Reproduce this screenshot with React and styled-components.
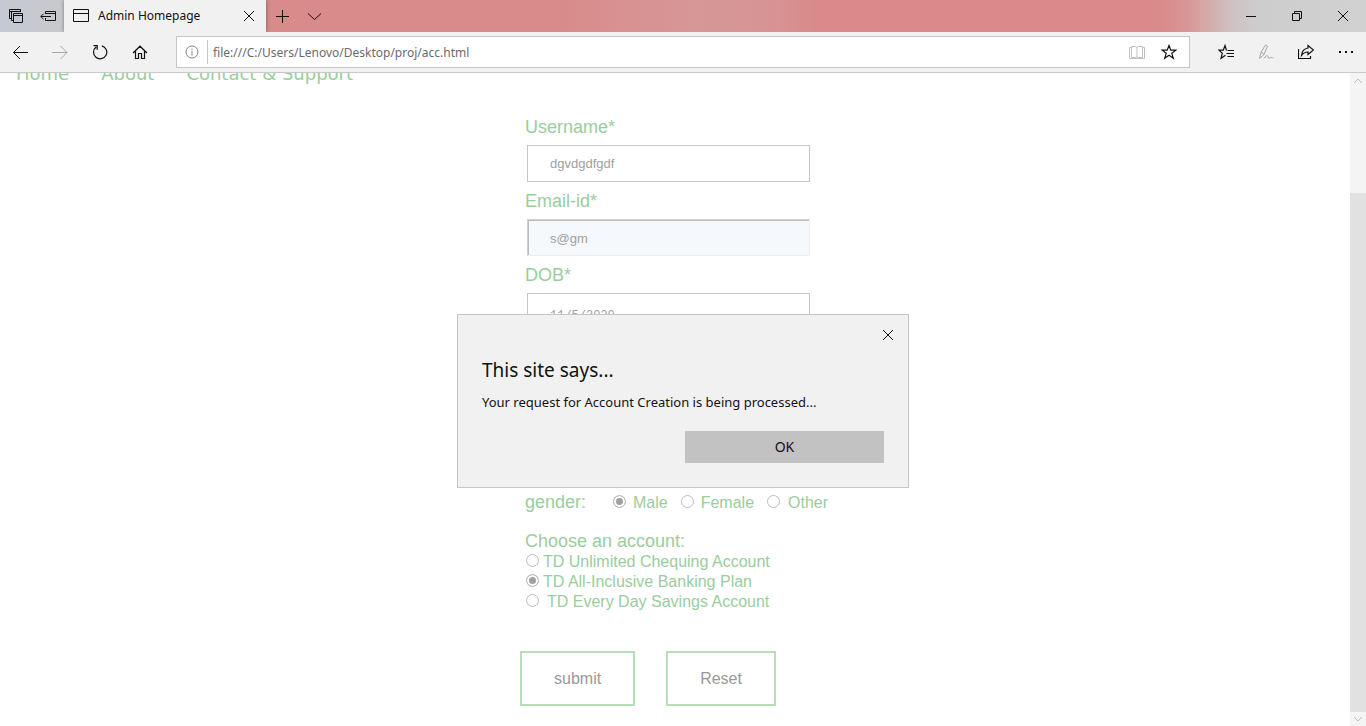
import React from "react";
import styled, { createGlobalStyle, css } from "styled-components";

const GlobalStyle = createGlobalStyle`
  * { box-sizing: border-box; }
  body {
    margin: 0;
    background: #fff;
    font-family: "Noto Sans", "Open Sans", sans-serif;
  }
  button, input { font: inherit; }
`;

const green = "#9acd9e";
const arial = '"Liberation Sans", Arial, sans-serif';

const Window = styled.div`
  display: flex;
  flex-direction: column;
  height: 100vh;
  overflow: hidden;
`;

const TitleBar = styled.header`
  display: flex;
  flex: none;
  height: 32px;
  background: linear-gradient(
    90deg,
    #c3c9d3 0%,
    #c9c9cc 5%,
    #d98a8a 17%,
    #d98b8b 41%,
    #d79797 51%,
    #d79494 56%,
    #d98a89 60%,
    #d98a89 85%,
    #d79796 87%,
    #cfc0c0 90%,
    #cdcdcd 92%,
    #d1d1d1 100%
  );
`;

const IconButton = styled.button`
  display: flex;
  align-items: center;
  justify-content: center;
  flex: none;
  width: ${(p) => p.$width || 40}px;
  height: 100%;
  padding: 0;
  border: 0;
  background: none;
  color: ${(p) => (p.$muted ? "#a6a6a6" : "#111")};
`;

const Icon = styled.svg.attrs({ viewBox: "0 0 16 16", "aria-hidden": true })`
  display: block;
  flex: none;
  width: 16px;
  height: 16px;
  fill: none;
  stroke: currentColor;
  stroke-width: 1;
`;

const Tab = styled.div`
  display: flex;
  align-items: center;
  flex: none;
  width: 202px;
  padding-left: 9px;
  gap: 9px;
  background: #f1f1f1;
  color: #111;
  font-size: 12px;
  box-shadow: 0 0 4px rgba(0, 0, 0, 0.4);
  clip-path: inset(0 -4px 0 -4px);
`;

const TabTitle = styled.span`
  flex: 1;
  padding-bottom: 2px;
  white-space: nowrap;
`;

const Spacer = styled.div`
  flex: 1;
`;

const ToolBar = styled.div`
  display: flex;
  align-items: center;
  flex: none;
  height: 41px;
  background: #f1f1f1;
  border-bottom: 1px solid #c9c9c9;
`;

const AddressBar = styled.div`
  display: flex;
  align-items: center;
  flex: 1;
  height: 32px;
  margin: 0 16px;
  padding-right: 4px;
  border: 1px solid #c6c6c6;
  background: #fff;
`;

const Address = styled.input`
  flex: 1;
  min-width: 0;
  height: 24px;
  padding: 0 5px;
  border: 0;
  border-left: 1px solid #c6c6c6;
  outline: 0;
  background: none;
  color: #6b6b6b;
  font-size: 12px;
`;

const Viewport = styled.div`
  position: relative;
  display: flex;
  flex: 1;
  min-height: 0;
`;

const Page = styled.main`
  flex: 1;
  overflow: hidden;
  color: ${green};
  font-family: ${arial};
`;

const Nav = styled.nav`
  display: flex;
  gap: 32px;
  height: 20px;
  margin-top: -9px;
  padding-left: 16px;
  font: 18px/20px "DejaVu Sans", Verdana, sans-serif;
`;

const NavLink = styled.a`
  color: ${green};
  text-decoration: none;
`;

const Form = styled.form`
  width: 310px;
  margin: 33px auto 0;
`;

const Field = styled.div`
  margin-bottom: 9px;
  padding-left: 5px;
`;

const labelText = css`
  font-size: 18px;
  line-height: 20px;
`;

const Label = styled.label`
  display: block;
  margin-bottom: 8px;
  ${labelText}
`;

const TextInput = styled.input`
  display: block;
  width: 283px;
  height: 37px;
  margin-left: 2px;
  padding: 0 22px;
  border: 1px solid #c6c6c6;
  outline: 0;
  background: #fff;
  color: #a0a0a0;
  font-family: ${(p) => (p.$mono ? '"Liberation Mono", monospace' : arial)};
  font-size: ${(p) => (p.$mono ? 12 : 13)}px;
  line-height: 16px;
  ${(p) =>
    p.$filled &&
    css`
      padding-top: 2px;
      border-color: #d0d0d0 #eeeeee #eeeeee #d0d0d0;
      background: #f5f9fd;
      box-shadow: inset 1px 1px #bcbcbc;
    `}
  ${(p) =>
    p.$mono &&
    css`
      padding-top: 8px;
    `}
`;

const Group = styled.fieldset`
  min-width: 0;
  margin: 0;
  padding: 0 0 0 5px;
  border: 0;
`;

const GenderGroup = styled(Group)`
  display: flex;
  align-items: center;
  height: 20px;
  margin: 162px 0 19px;
  white-space: nowrap;
`;

const GroupTitle = styled.span`
  display: block;
  ${labelText}
`;

const GenderTitle = styled(GroupTitle)`
  flex: none;
  width: 88px;
`;

const Option = styled.label`
  display: flex;
  align-items: center;
  gap: ${(p) => p.$gap}px;
  height: 20px;
  margin-right: 13px;
  padding-top: 2px;
  font-size: 16px;
  line-height: 20px;
  white-space: nowrap;
`;

const Radio = styled.input.attrs({ type: "radio" })`
  appearance: none;
  flex: none;
  width: 13px;
  height: 13px;
  margin: 0 0 4px;
  border: 1px solid #bdbdbd;
  border-radius: 50%;
  background: #fff;
  &:checked {
    background: #a0a0a0;
    box-shadow: inset 0 0 0 2px #fff;
  }
`;

const AccountOption = styled(Option)`
  padding-left: 1px;
`;

const Actions = styled.div`
  display: flex;
  gap: 31px;
  margin-top: 40px;
`;

const ActionButton = styled.button`
  height: 55px;
  padding: 0 32px;
  border: 2px solid #b7dfb9;
  background: #fff;
  color: #999;
  font-family: ${arial};
  font-size: 16px;
`;

const ScrollBar = styled.div`
  display: flex;
  flex-direction: column;
  flex: none;
  width: 16px;
  background: #f4f4f4;
  color: #bdbdbd;
`;

const ScrollArrow = styled.div`
  flex: none;
  height: 16px;
`;

const ScrollThumb = styled.div`
  flex: 1;
  margin-top: 104px;
  margin-bottom: -2px;
  background: #e1e1e1;
`;

const Overlay = styled.div`
  position: absolute;
  inset: 0;
  display: flex;
  align-items: center;
  justify-content: center;
  padding-top: 3px;
`;

const Dialog = styled.section`
  display: flex;
  flex-direction: column;
  width: 452px;
  padding: 0 24px 24px;
  border: 1px solid #c6c6c6;
  background: #f1f1f1;
  color: #111;
`;

const DialogClose = styled(IconButton)`
  align-self: flex-end;
  height: 40px;
  margin-right: -24px;
`;

const DialogTitle = styled.h1`
  margin: 0;
  font-size: 19px;
  font-weight: 400;
  line-height: 30px;
`;

const DialogText = styled.p`
  margin: 7px 0 19px;
  font-size: 13px;
  line-height: 20px;
`;

const OkButton = styled.button`
  align-self: flex-end;
  width: 199px;
  height: 32px;
  padding: 0 0 2px;
  border: 0;
  background: #c2c2c2;
  color: #111;
  font-size: 14px;
`;

const Cross = () => (
  <Icon>
    <path d="M3 3l10 10M13 3L3 13" />
  </Icon>
);

export default function App() {
  return (
    <Window>
      <GlobalStyle />
      <TitleBar>
        <IconButton $width={32} aria-label="Tabs set aside">
          <Icon>
            <path d="M3 10.5H1.5v-9h11V4M1.5 3.5h11M5.500 12.500H3.500v-9M5.500 5.500h9v9h-9zM5.500 7.500h9" />
          </Icon>
        </IconButton>
        <IconButton $width={32} aria-label="Set these tabs aside">
          <Icon>
            <path d="M5.5 6V3.5h10v9h-10V10M5.5 5.5h10M.8 8.5H11M3.5 5.8L.8 8.5l2.7 2.7" />
          </Icon>
        </IconButton>
        <Tab>
          <Icon>
            <path d="M.5 1.5h15v12H.5zM.5 5.5h15" />
          </Icon>
          <TabTitle>Admin Homepage</TabTitle>
          <IconButton $width={34} aria-label="Close tab">
            <Cross />
          </IconButton>
        </Tab>
        <IconButton $width={32} aria-label="New tab">
          <Icon>
            <path d="M8.5 2v13M2 8.5h13" />
          </Icon>
        </IconButton>
        <IconButton $width={32} aria-label="Show tab previews">
          <Icon>
            <path d="M2 5.5l6.5 6L15 5.5" />
          </Icon>
        </IconButton>
        <Spacer />
        <IconButton $width={46} aria-label="Minimize">
          <Icon>
            <path d="M3 8.5h10" />
          </Icon>
        </IconButton>
        <IconButton $width={46} aria-label="Restore">
          <Icon>
            <path d="M3.5 5.5h7v7h-7zM5.5 5.5v-2h7v7h-2" />
          </Icon>
        </IconButton>
        <IconButton $width={46} aria-label="Close">
          <Cross />
        </IconButton>
      </TitleBar>

      <ToolBar>
        <IconButton aria-label="Back">
          <Icon>
            <path d="M16 8.5H1.5M8 2L1.5 8.5 8 15" />
          </Icon>
        </IconButton>
        <IconButton $muted aria-label="Forward">
          <Icon>
            <path d="M0 8.5h15M8.5 2L15 8.5 8.5 15" />
          </Icon>
        </IconButton>
        <IconButton aria-label="Refresh">
          <Icon>
            <path d="M9.8 1.8A6.6 6.6 0 1 1 4.2 2.9M1.5 1.7h3.7v4" strokeWidth="1.2" />
          </Icon>
        </IconButton>
        <IconButton aria-label="Home">
          <Icon>
            <path d="M1 9l7-6.8L15 9M3.5 7v7.5h3v-5h3v5h3V7" strokeWidth="1.2" />
          </Icon>
        </IconButton>
        <AddressBar>
          <IconButton $width={30} $muted aria-label="Site information">
            <Icon>
              <circle cx="8" cy="8" r="6" stroke="#858585" />
              <path d="M8 7v4.5M8 4.5V6" stroke="#858585" />
            </Icon>
          </IconButton>
          <Address
            aria-label="Address"
            defaultValue="file:///C:/Users/Lenovo/Desktop/proj/acc.html"
          />
          <IconButton $width={32} $muted aria-label="Reading view">
            <Icon>
              <path
                d="M8 3.5Q6.5 2 5 2.5H2.5v11H6Q7.5 13.5 8 14.5Q8.5 13.5 10 13.5h3.5v-11H11Q9.5 2 8 3.5zM8 3.5v11M2.5 3.5h-2v11h15v-11h-2"
                stroke="#c0c0c0"
              />
            </Icon>
          </IconButton>
          <IconButton $width={32} aria-label="Add to favorites">
            <Icon>
              <path
                d="M8 1.5l1.8 4.7h5l-4 3.1 1.5 5L8 11.3l-4.3 3 1.5-5-4-3.1h5z"
                strokeWidth="1.2"
              />
            </Icon>
          </IconButton>
        </AddressBar>
        <IconButton aria-label="Favorites">
          <Icon>
            <path
              d="M9.5 6.5H16M8.500 9.500H16M9.500 12.500H16M8.500 6.500L7 1.500 5.300 6.200H1l3.300 3.100-1.300 5 4.500-3"
              strokeWidth="1.2"
            />
          </Icon>
        </IconButton>
        <IconButton $muted aria-label="Add notes">
          <Icon>
            <path d="M1.5 14.5L3 8.5 7 1.5Q8.5.5 9.500 2L6 10.500l-4.500 4M3 8.500Q5 8.500 6 10.500M6 14.500c2-3.500 4-3.500 4-1.500s2 1 3 .5 1.500.5 2.500.5" />
          </Icon>
        </IconButton>
        <IconButton aria-label="Share">
          <Icon>
            <path d="M.5 5v9.500h12V12M10 1.500L15.500 6 10 10.500V8Q6 8 3.500 11.500 4 5 10 4z" strokeWidth="1.200" />
          </Icon>
        </IconButton>
        <IconButton aria-label="Settings and more">
          <Icon>
            <path d="M1 8h2M7 8h2M13 8h2" strokeWidth="2" />
          </Icon>
        </IconButton>
      </ToolBar>

      <Viewport>
        <Page>
          <Nav>
            <NavLink href="#home">Home</NavLink>
            <NavLink href="#about">About</NavLink>
            <NavLink href="#contact">Contact &amp; Support</NavLink>
          </Nav>
          <Form onSubmit={(e) => e.preventDefault()}>
            <Field>
              <Label htmlFor="username">Username*</Label>
              <TextInput id="username" defaultValue="dgvdgdfgdf" />
            </Field>
            <Field>
              <Label htmlFor="email">Email-id*</Label>
              <TextInput id="email" $filled defaultValue="s@gm" />
            </Field>
            <Field>
              <Label htmlFor="dob">DOB*</Label>
              <TextInput id="dob" $mono defaultValue="11/5/2020" />
            </Field>
            <GenderGroup aria-label="gender">
              <GenderTitle>gender:</GenderTitle>
              <Option $gap={7}>
                <Radio name="gender" defaultChecked />
                Male
              </Option>
              <Option $gap={7}>
                <Radio name="gender" />
                Female
              </Option>
              <Option $gap={8}>
                <Radio name="gender" />
                Other
              </Option>
            </GenderGroup>
            <Group aria-label="Choose an account">
              <GroupTitle>Choose an account:</GroupTitle>
              <AccountOption $gap={4}>
                <Radio name="account" />
                TD Unlimited Chequing Account
              </AccountOption>
              <AccountOption $gap={4}>
                <Radio name="account" defaultChecked />
                TD All-Inclusive Banking Plan
              </AccountOption>
              <AccountOption $gap={8}>
                <Radio name="account" />
                TD Every Day Savings Account
              </AccountOption>
            </Group>
            <Actions>
              <ActionButton type="submit">submit</ActionButton>
              <ActionButton type="reset">Reset</ActionButton>
            </Actions>
          </Form>
        </Page>
        <ScrollBar>
          <ScrollArrow>
            <Icon>
              <path d="M4 10l4-4 4 4" />
            </Icon>
          </ScrollArrow>
          <ScrollThumb />
          <ScrollArrow>
            <Icon>
              <path d="M4 7l4 4 4-4" />
            </Icon>
          </ScrollArrow>
        </ScrollBar>
        <Overlay>
          <Dialog role="dialog" aria-labelledby="dialog-title">
            <DialogClose aria-label="Close dialog">
              <Cross />
            </DialogClose>
            <DialogTitle id="dialog-title">This site says...</DialogTitle>
            <DialogText>Your request for Account Creation is being processed...</DialogText>
            <OkButton>OK</OkButton>
          </Dialog>
        </Overlay>
      </Viewport>
    </Window>
  );
}
